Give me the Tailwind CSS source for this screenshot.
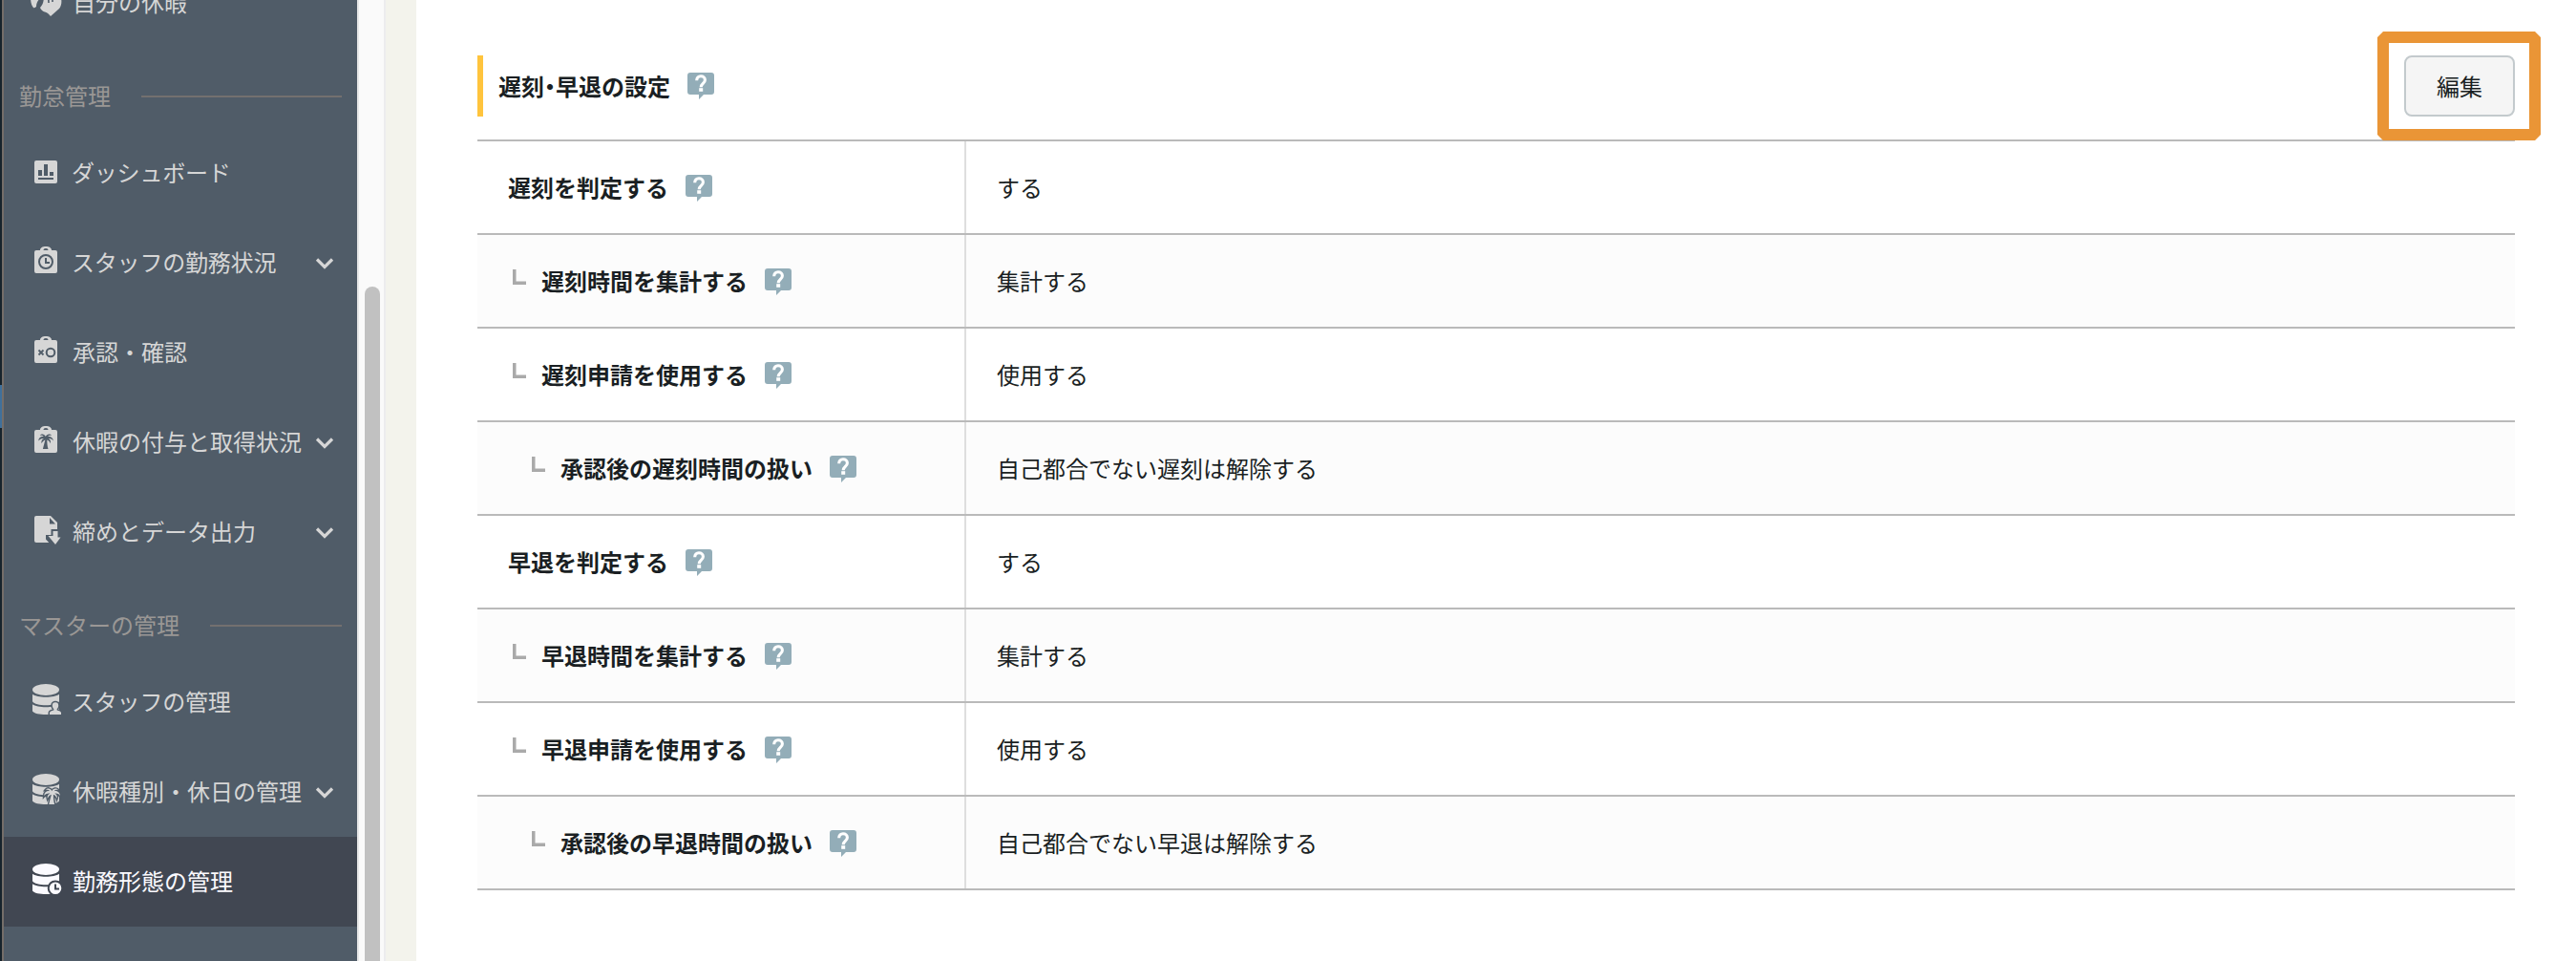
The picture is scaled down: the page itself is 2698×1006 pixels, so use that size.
<!DOCTYPE html>
<html lang="ja">
<head>
<meta charset="utf-8">
<title>勤務形態の管理</title>
<script src="https://cdn.jsdelivr.net/npm/@tailwindcss/browser@4"></script>
</head>
<body class="h-[1006px] w-[2698px] overflow-hidden bg-white font-['Noto_Sans_CJK_JP',sans-serif] text-[24px] leading-[36px] text-[#1a1f23]">
<svg class="hidden">
  <symbol id="help" viewBox="0 0 28 28">
    <path fill="#93adb8" d="M3 0h22a3 3 0 0 1 3 3v17a3 3 0 0 1-3 3h-8l-5 5v-5H3a3 3 0 0 1-3-3V3a3 3 0 0 1 3-3z"/>
    <path fill="none" stroke="#fff" stroke-width="3.100" d="M9.700 8.200C9.700 5.200 11.500 3.800 14 3.800s4.400 1.500 4.400 4c0 3.500-4.200 3.800-4.200 7.400"/>
    <path fill="#fff" d="M12.200 16.200h4v3.600h-4z"/>
  </symbol>
  <symbol id="branch" viewBox="0 0 14 16"><path fill="#aaa" d="M0 0h3.500v12.600H14V16H0z"/></symbol>
  <symbol id="chev" viewBox="0 0 20 14"><path fill="none" stroke="#d6d6d6" stroke-width="3.200" d="M2 2.500l8 8 8-8"/></symbol>
  <symbol id="case" viewBox="0 0 36 36">
    <path fill="#d6d6d6" fill-rule="evenodd" d="M8 5h4c0-2.500 2.500-4 6-4s6 1.500 6 4h4a2 2 0 0 1 2 2v20a2 2 0 0 1-2 2H8a2 2 0 0 1-2-2V7a2 2 0 0 1 2-2zm7.500 0h5c0-1.300-1-2-2.500-2s-2.500.7-2.500 2z"/>
  </symbol>
  <symbol id="palm" viewBox="0 0 16 16" overflow="visible">
    <path d="M7.800 3C6.800.3 3.500-.4 1.800 1.800c2-.2 3 .2 4 1.200C3 2.400.3 4 .2 7.600 2 5.400 4 5 6 5.300 4 6 2.900 7.800 3.600 10.200 4.600 8 6 6.900 7.400 6.400 6.700 9 5.700 12.500 4.900 16h5.600C9.500 13 9.300 9.500 9.300 6.400c1.500.4 2.700 1.500 3.400 3.800.9-2.400-.2-4.100-2-4.900 2.200-.3 3.800.2 5.200 2.200C15.700 4.300 13 2.500 10 3c1-1 2.300-1.500 4.100-1.200C12.300-.4 8.900.3 7.800 3z"/>
  </symbol>
  <symbol id="db" viewBox="0 -2 36 36">
    <ellipse cx="18" cy="5" rx="14" ry="6"/>
    <path d="M4 9.800c5 4 23 4 28 0V17.300c-3 5.400-25 5.400-28 0zM4 20.300c5 4 23 4 28 0V27.500c-3 4.700-25 4.700-28 0z"/>
  </symbol>
</svg>
<div class="flex h-full">
  <div class="h-full w-[2px] bg-[#17232c] pt-[403px]"><div class="h-[45px] bg-[#40709b]"></div></div>
  <div class="h-full w-[2px] bg-[#746e69]"></div>
  <nav class="h-full w-[370px] shrink-0 overflow-hidden bg-[#505c68] text-[#d6d6d6]">
    <div class="-mt-[44px] flex h-[94px] items-center gap-[10px] pl-[26px]">
      <svg class="h-9 w-9 overflow-visible" viewBox="0 0 36 36" fill="#d6d6d6"><path d="M2 12h11c-3 3-5 6-5 10-1 1-2 1.500-3 1-2-2-3-6-3-11z"/><path d="M16 10h17c2 5 2 10-1 14-3 3-6 5-9 8-2-2-3-4-6-4.500-2-.5-4-2-5-4.500 3-3 4-7 4-13z"/><path stroke="#505c68" stroke-width="1.600" d="M20.500 10l.5 8M25 10v7"/></svg>
      <span class="pb-[3px]">自分の休暇</span>
    </div>
    <div class="flex h-[84px] items-center gap-8 pr-4 pl-4 pt-[18px] text-[#9a9795]"><span class="pb-[2px]">勤怠管理</span><i class="h-[2px] flex-1 bg-[#73706f]"></i></div>
    <div class="flex h-[94px] items-center gap-[10px] pl-[26px]">
      <svg class="h-9 w-9" viewBox="0 0 36 36"><rect x="6" y="5" width="24" height="24" rx="2" fill="#d6d6d6"/><path fill="#505c68" d="M10 15h4v6h-4zM16 9h4v12h-4zM22 17h4v4h-4zM10 23h16v2H10z"/></svg>
      <span class="-ml-px pb-[3px] tracking-[-0.200px]">ダッシュボード</span>
    </div>
    <div class="flex h-[94px] items-center gap-[10px] pr-6 pl-[26px]">
      <svg class="h-9 w-9" viewBox="0 0 36 36"><use href="#case"/><circle cx="18" cy="17" r="7" fill="none" stroke="#505c68" stroke-width="2"/><path fill="none" stroke="#505c68" stroke-width="2" d="M18 13v5h4"/></svg>
      <span class="-ml-px flex-1 pb-[3px] tracking-[-0.200px]">スタッフの勤務状況</span><svg class="mt-[2px] h-[14px] w-5"><use href="#chev"/></svg>
    </div>
    <div class="flex h-[94px] items-center gap-[10px] pl-[26px]">
      <svg class="h-9 w-9" viewBox="0 0 36 36"><use href="#case"/><circle cx="23" cy="18" r="4.300" fill="none" stroke="#505c68" stroke-width="2"/><path fill="none" stroke="#505c68" stroke-width="1.800" d="M10.500 15.500l5 5m0-5l-5 5"/></svg>
      <span class="pb-[3px]">承認・確認</span>
    </div>
    <div class="flex h-[94px] items-center gap-[10px] pr-6 pl-[26px]">
      <svg class="h-9 w-9" viewBox="0 0 36 36"><use href="#case"/><use href="#palm" x="10" y="9" width="16" height="16" fill="#505c68"/></svg>
      <span class="flex-1 pb-[3px] whitespace-nowrap">休暇の付与と取得状況</span><svg class="-ml-[10px] mt-[2px] h-[14px] w-5"><use href="#chev"/></svg>
    </div>
    <div class="flex h-[94px] items-center gap-[10px] pr-6 pl-[26px]">
      <svg class="h-9 w-9" viewBox="0 0 36 36"><path fill="#d6d6d6" d="M8 1h15l7 7v21H8a2 2 0 0 1-2-2V3a2 2 0 0 1 2-2z"/><path fill="#505c68" d="M22 3v6.500h6zM23.500 15H32v17h-8l-6-6.500V21h5.500z"/><path fill="#d6d6d6" d="M25.500 17h5v6.500h3L28 31l-7.500-9h5z"/></svg>
      <span class="flex-1 pb-[3px]">締めとデータ出力</span><svg class="mt-[2px] h-[14px] w-5"><use href="#chev"/></svg>
    </div>
    <div class="flex h-[84px] items-center gap-8 pr-4 pl-4 pt-[18px] text-[#9a9795]"><span class="pb-[2px]">マスターの管理</span><i class="h-[2px] flex-1 bg-[#73706f]"></i></div>
    <div class="flex h-[94px] items-center gap-[10px] pl-[26px]">
      <svg class="h-9 w-9 overflow-visible" viewBox="0 0 36 36" fill="#d6d6d6"><use href="#db" y="-2" width="36" height="36"/><path stroke="#505c68" stroke-width="3" paint-order="stroke" d="M28 18.200a3.200 3.200 0 0 1 3.200 3.200c0 1.800-.8 3-1.500 3.700v1.400c2.300.5 4.300 1.200 4.300 2.800V31H22v-1.700c0-1.600 2-2.300 4.300-2.800v-1.400c-.7-.7-1.500-1.900-1.500-3.700a3.200 3.200 0 0 1 3.200-3.200z"/></svg>
      <span class="-ml-px pb-[3px] tracking-[-0.200px]">スタッフの管理</span>
    </div>
    <div class="flex h-[94px] items-center gap-[10px] pr-6 pl-[26px]">
      <svg class="h-9 w-9 overflow-visible" viewBox="0 0 36 36" fill="#d6d6d6"><use href="#db" y="-2" width="36" height="36"/><use href="#palm" x="15" y="14" width="19" height="17" stroke="#505c68" stroke-width="2.600"/><use href="#palm" x="15" y="14" width="19" height="17"/></svg>
      <span class="flex-1 pb-[3px] whitespace-nowrap">休暇種別・休日の管理</span><svg class="-ml-[10px] mt-[2px] h-[14px] w-5"><use href="#chev"/></svg>
    </div>
    <div class="flex h-[94px] items-center gap-[10px] bg-[#414752] pl-[26px] text-[#fbfaff]">
      <svg class="h-9 w-9 overflow-visible" viewBox="0 0 36 36" fill="#fbfaff"><use href="#db" y="-2" width="36" height="36"/><circle cx="28" cy="24.700" r="7.300" stroke="#414752" stroke-width="2"/><path fill="none" stroke="#414752" stroke-width="2" d="M28 20.500v5h4"/></svg>
      <span class="pb-[3px]">勤務形態の管理</span>
    </div>
  </nav>
  <div class="h-full w-[30px] shrink-0 border-x-2 border-l-[#e8e8e8] border-r-[#ececee] bg-[#fafafa] px-[6px] pt-[300px]"><div class="h-[740px] w-4 rounded-full bg-[#c1c1c1]"></div></div>
  <div class="h-full w-8 shrink-0 bg-[#f3f3ec]"></div>
  <main class="w-[2198px] pt-[58px] pl-16">
    <header class="flex h-16 items-center border-l-6 border-[#ffc43d] pl-[16px]">
      <h2 class="w-[180px] font-bold whitespace-nowrap">遅刻<span class="[font-feature-settings:'halt']">・</span>早退の設定</h2>
      <svg class="ml-[18px] h-7 w-7"><use href="#help"/></svg>
    </header>
    <div class="mt-6 w-[2134px] border-t-2 border-[#bababa]">
      <div class="flex h-[98px] border-b-2 border-[#bababa]">
        <div class="flex w-[512px] items-center border-r-2 border-[#dedede] pl-8 font-bold">遅刻を判定する<svg class="ml-[18px] mt-px h-7 w-7"><use href="#help"/></svg></div><div class="flex items-center pl-8">する</div>
      </div>
      <div class="flex h-[98px] border-b-2 border-[#bababa] bg-[#fcfcfc]">
        <div class="flex w-[512px] items-center border-r-2 border-[#dedede] pl-[37px] font-bold"><svg class="mr-[16px] mb-[8px] h-4 w-[14px]"><use href="#branch"/></svg>遅刻時間を集計する<svg class="ml-[18px] mt-px h-7 w-7"><use href="#help"/></svg></div><div class="flex items-center pl-8">集計する</div>
      </div>
      <div class="flex h-[98px] border-b-2 border-[#bababa]">
        <div class="flex w-[512px] items-center border-r-2 border-[#dedede] pl-[37px] font-bold"><svg class="mr-[16px] mb-[8px] h-4 w-[14px]"><use href="#branch"/></svg>遅刻申請を使用する<svg class="ml-[18px] mt-px h-7 w-7"><use href="#help"/></svg></div><div class="flex items-center pl-8">使用する</div>
      </div>
      <div class="flex h-[98px] border-b-2 border-[#bababa] bg-[#fcfcfc]">
        <div class="flex w-[512px] items-center border-r-2 border-[#dedede] pl-[57px] font-bold"><svg class="mr-[16px] mb-[8px] h-4 w-[14px]"><use href="#branch"/></svg>承認後の遅刻時間の扱い<svg class="ml-[18px] mt-px h-7 w-7"><use href="#help"/></svg></div><div class="flex items-center pl-8">自己都合でない遅刻は解除する</div>
      </div>
      <div class="flex h-[98px] border-b-2 border-[#bababa]">
        <div class="flex w-[512px] items-center border-r-2 border-[#dedede] pl-8 font-bold">早退を判定する<svg class="ml-[18px] mt-px h-7 w-7"><use href="#help"/></svg></div><div class="flex items-center pl-8">する</div>
      </div>
      <div class="flex h-[98px] border-b-2 border-[#bababa] bg-[#fcfcfc]">
        <div class="flex w-[512px] items-center border-r-2 border-[#dedede] pl-[37px] font-bold"><svg class="mr-[16px] mb-[8px] h-4 w-[14px]"><use href="#branch"/></svg>早退時間を集計する<svg class="ml-[18px] mt-px h-7 w-7"><use href="#help"/></svg></div><div class="flex items-center pl-8">集計する</div>
      </div>
      <div class="flex h-[98px] border-b-2 border-[#bababa]">
        <div class="flex w-[512px] items-center border-r-2 border-[#dedede] pl-[37px] font-bold"><svg class="mr-[16px] mb-[8px] h-4 w-[14px]"><use href="#branch"/></svg>早退申請を使用する<svg class="ml-[18px] mt-px h-7 w-7"><use href="#help"/></svg></div><div class="flex items-center pl-8">使用する</div>
      </div>
      <div class="flex h-[98px] border-b-2 border-[#bababa] bg-[#fcfcfc]">
        <div class="flex w-[512px] items-center border-r-2 border-[#dedede] pl-[57px] font-bold"><svg class="mr-[16px] mb-[8px] h-4 w-[14px]"><use href="#branch"/></svg>承認後の早退時間の扱い<svg class="ml-[18px] mt-px h-7 w-7"><use href="#help"/></svg></div><div class="flex items-center pl-8">自己都合でない早退は解除する</div>
      </div>
    </div>
  </main>
</div>
<!-- highlight frame over the edit button -->
<div class="absolute top-[33px] left-[2490px] h-[114px] w-[171px] pt-[25px] pl-7">
  <svg class="absolute inset-0 h-[114px] w-[171px]" viewBox="0 0 171 114"><path fill="#ea9536" fill-rule="evenodd" d="M6 0h159l6 6v102l-6 6H6l-6-6V6zM12 12v90h147V12z"/></svg>
  <button class="relative flex h-16 w-[116px] items-center justify-center rounded-lg border-2 border-[#c3cacd] bg-[#f5f5f5]">編集</button>
</div>
</body>
</html>
